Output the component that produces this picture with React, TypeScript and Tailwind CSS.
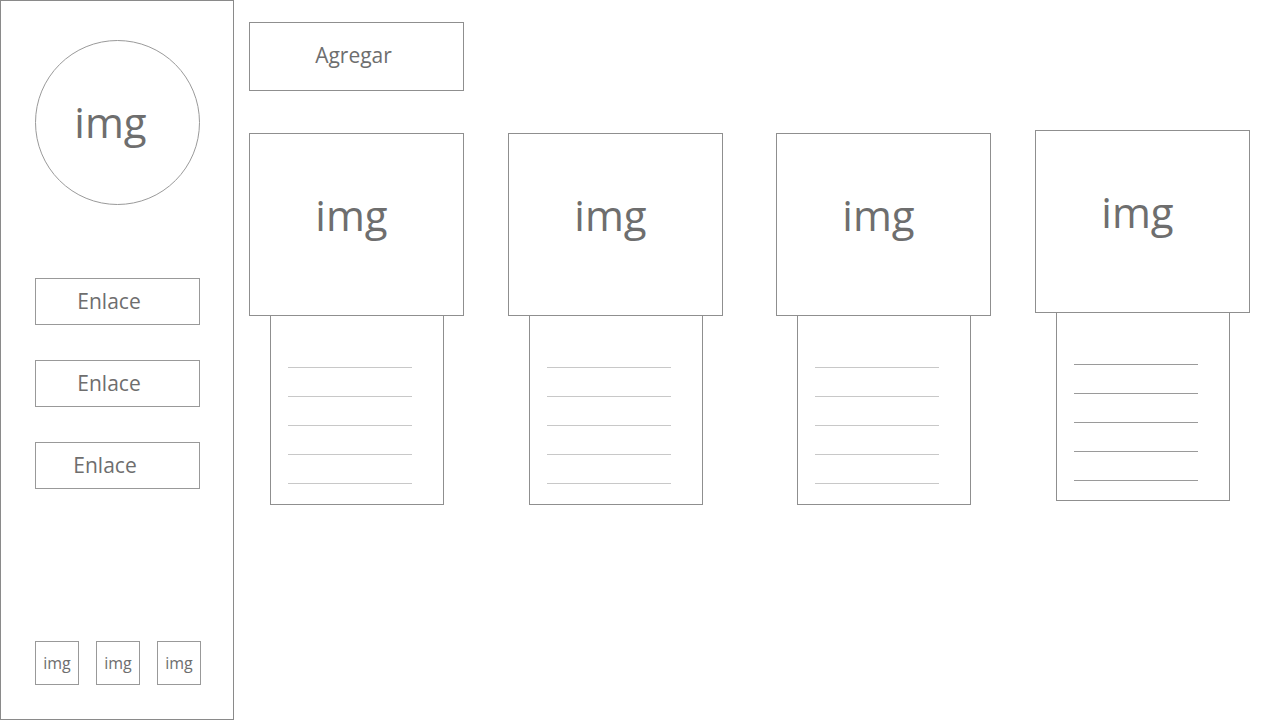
const cards = [
  { ml: "ml-0", mt: "mt-0", textH: "h-[189px]", lines: "border-[#c8c8c8]" },
  { ml: "ml-[44px]", mt: "mt-0", textH: "h-[189px]", lines: "border-[#c8c8c8]" },
  { ml: "ml-[53px]", mt: "mt-0", textH: "h-[189px]", lines: "border-[#c8c8c8]" },
  { ml: "ml-[44px]", mt: "-mt-[3px]", textH: "h-[188px]", lines: "border-[#9a9a9a]" },
];

function Card({ ml, mt, textH, lines }: { ml: string; mt: string; textH: string; lines: string }) {
  return (
    <div className={`flex flex-col ${ml} ${mt}`}>
      <div className="w-[215px] h-[183px] border border-[#8f8f8f] flex items-center justify-center pb-[20px] pr-[10px]">
        <span className="text-[42px] text-[#6e6e6e]">img</span>
      </div>
      <div className={`w-[174px] ${textH} ml-[21px] border border-t-0 border-[#8f8f8f] pl-[17px] pt-[51px]`}>
        {[0, 1, 2, 3, 4].map((i) => (
          <div key={i} className={`w-[124px] h-[29px] border-t ${lines}`} />
        ))}
      </div>
    </div>
  );
}

export default function App() {
  return (
    <div
      className="flex w-[1280px] h-[720px] bg-white"
      style={{ fontFamily: "'Open Sans', 'Noto Sans', sans-serif" }}
    >
      <aside className="w-[234px] h-[720px] border border-[#8a8a8a] flex flex-col pl-[34px] pt-[39px] pb-[34px]">
        <div className="w-[165px] h-[165px] rounded-full border border-[#9a9a9a] flex items-center justify-center pr-[14px] pb-[2px]">
          <span className="text-[42px] text-[#6e6e6e]">img</span>
        </div>

        <div className="flex flex-col gap-[35px] mt-[73px]">
          {["Enlace", "Enlace", "Enlace"].map((t, i) => (
            <a
              key={i}
              className={`w-[165px] h-[47px] border border-[#999] flex items-center justify-center text-[21px] text-[#6e6e6e] ${
                i === 2 ? "pr-[25px]" : "pr-[17px]"
              }`}
            >
              {t}
            </a>
          ))}
        </div>

        <div className="mt-auto flex gap-[17px]">
          {[0, 1, 2].map((i) => (
            <div
              key={i}
              className="w-[44px] h-[44px] border border-[#999] flex items-center justify-center text-[16px] text-[#6e6e6e]"
            >
              img
            </div>
          ))}
        </div>
      </aside>

      <main className="flex-1 pl-[15px] pt-[22px]">
        <button className="w-[215px] h-[69px] border border-[#8f8f8f] text-[21px] text-[#6e6e6e] flex items-center justify-center pb-[1px] pr-[6px]">
          Agregar
        </button>

        <div className="flex items-start mt-[42px]">
          {cards.map((c, i) => (
            <Card key={i} {...c} />
          ))}
        </div>
      </main>
    </div>
  );
}
